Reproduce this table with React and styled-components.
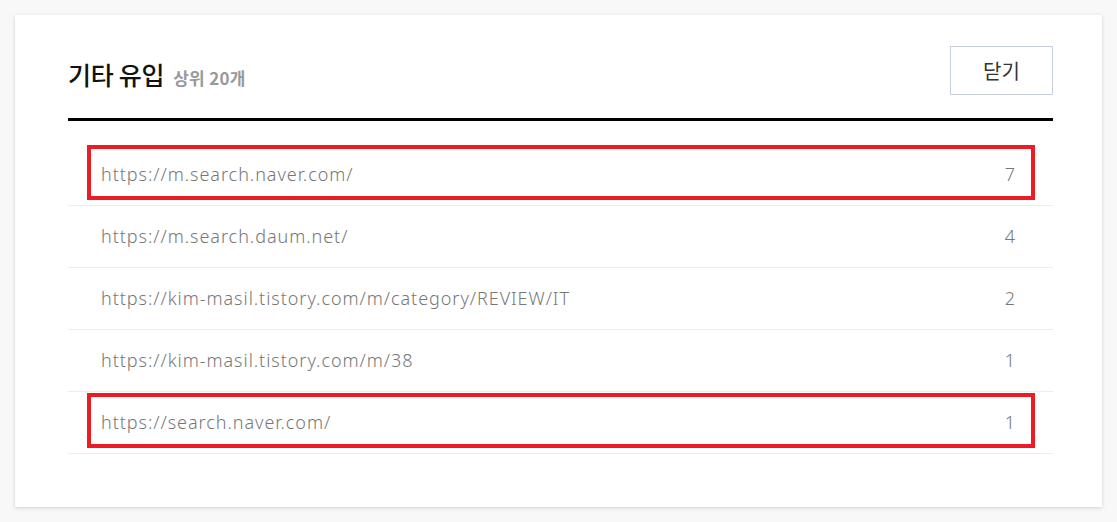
import React from "react";
import styled, { createGlobalStyle } from "styled-components";

const GlobalStyle = createGlobalStyle`
  html, body {
    margin: 0;
    padding: 0;
    background: #f8f8f8;
    font-family: "Noto Sans", "Noto Sans CJK KR", sans-serif;
  }
`;

const Page = styled.div`
  padding: 15px;
  box-sizing: border-box;
  width: 1117px;
  height: 522px;
`;

const Card = styled.section`
  width: 1087px;
  height: 492px;
  box-sizing: border-box;
  background: #fff;
  box-shadow: 0 1px 4px rgba(0, 0, 0, 0.16);
  padding: 31px 49px 0 53px;
`;

const Header = styled.div`
  display: flex;
  align-items: center;
  justify-content: space-between;
  padding-bottom: 23px;
  border-bottom: 3px solid #000;
`;

const Title = styled.h2`
  margin: 0;
  padding-top: 6px;
  font-family: "Noto Sans CJK KR", sans-serif;
  font-size: 25px;
  font-weight: 500;
  color: #111;
  letter-spacing: -0.3px;
`;

const Sub = styled.span`
  margin-left: 9px;
  font-size: 17px;
  font-weight: 700;
  color: #999;
  letter-spacing: 0.3px;
`;

const CloseButton = styled.button`
  width: 103px;
  height: 49px;
  background: #fff;
  border: 1px solid #c7d0da;
  font-family: "Noto Sans CJK KR", sans-serif;
  font-size: 20px;
  color: #333;
  cursor: pointer;
`;

const List = styled.ul`
  list-style: none;
  margin: 0;
  padding: 23px 0 0;
`;

const Row = styled.li`
  position: relative;
  display: flex;
  align-items: center;
  justify-content: space-between;
  height: 59px;
  padding: 0 38px 2px 33px;
  border-bottom: 1px solid #ececec;
  font-size: 18px;
  font-weight: 300;
  letter-spacing: 0.95px;
  color: #777;

  &::after {
    content: "";
    display: ${(p) => (p.$marked ? "block" : "none")};
    position: absolute;
    left: 19px;
    right: 18px;
    top: 1px;
    bottom: 5px;
    border: 4px solid #ed1c24;
  }
`;

const Count = styled.span`
  font-size: 18px;
  letter-spacing: 0;
`;

const rows = [
  { url: "https://m.search.naver.com/", count: 7, marked: true },
  { url: "https://m.search.daum.net/", count: 4 },
  { url: "https://kim-masil.tistory.com/m/category/REVIEW/IT", count: 2 },
  { url: "https://kim-masil.tistory.com/m/38", count: 1 },
  { url: "https://search.naver.com/", count: 1, marked: true },
];

export default function App() {
  return (
    <>
      <GlobalStyle />
      <Page>
        <Card>
          <Header>
            <Title>
              기타 유입<Sub>상위 20개</Sub>
            </Title>
            <CloseButton>닫기</CloseButton>
          </Header>
          <List>
            {rows.map((r, i) => (
              <Row key={i} $marked={r.marked}>
                <span>{r.url}</span>
                <Count>{r.count}</Count>
              </Row>
            ))}
          </List>
        </Card>
      </Page>
    </>
  );
}
